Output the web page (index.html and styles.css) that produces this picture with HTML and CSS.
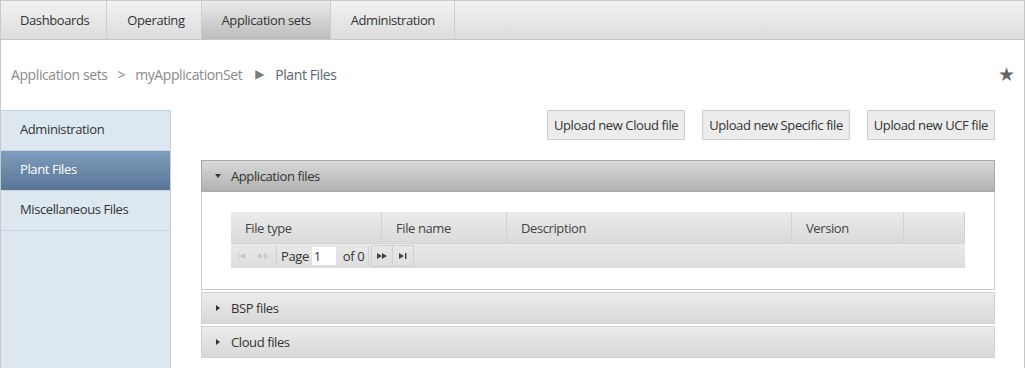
FILE: index.html
```html
<!DOCTYPE html>
<html lang="en">
<head>
  <meta charset="UTF-8" />
  <title>Plant Files</title>
  <link rel="stylesheet" href="styles.css">
</head>
<body>
  <div class="page">
    <nav class="topnav">
      <a class="tab">Dashboards</a>
      <a class="tab">Operating</a>
      <a class="tab active">Application sets</a>
      <a class="tab">Administration</a>
      <div class="tab-fill"></div>
    </nav>

    <div class="crumbs">
      <span class="crumb">Application sets</span>
      <span class="sep">&gt;</span>
      <span class="crumb">myApplicationSet</span>
      <span class="sep arrow">&#9654;</span>
      <span class="crumb current">Plant Files</span>
      <span class="star">&#9733;</span>
    </div>

    <div class="content">
      <aside class="sidebar">
        <div class="side-item">Administration</div>
        <div class="side-item active">Plant Files</div>
        <div class="side-item">Miscellaneous Files</div>
      </aside>

      <main class="main">
        <div class="actions">
          <button class="btn">Upload new Cloud file</button>
          <button class="btn">Upload new Specific file</button>
          <button class="btn">Upload new UCF file</button>
        </div>

        <section class="panel open">
          <div class="panel-head"><span class="caret down"></span>Application files</div>
          <div class="panel-body">
            <div class="grid">
              <div class="grid-head">
                <div class="col c1">File type</div>
                <div class="col c2">File name</div>
                <div class="col c3">Description</div>
                <div class="col c4">Version</div>
                <div class="col c5"></div>
              </div>
              <div class="pager">
                <span class="pg-ico off">
                  <svg width="8" height="6" viewBox="0 0 8 6"><rect x="0" y="0" width="1" height="6" fill="#c4c4c4"/><path d="M7 0 L2 3 L7 6 Z" fill="#c4c4c4"/></svg>
                </span>
                <span class="pg-ico off">
                  <svg width="10" height="6" viewBox="0 0 10 6"><path d="M4 0 L0 3 L4 6 Z M10 0 L5 3 L10 6 Z" fill="#c4c4c4"/></svg>
                </span>
                <span class="pg-sep"></span>
                <span class="pg-text">Page</span>
                <input class="pg-input" type="text" value="1">
                <span class="pg-text">of 0</span>
                <span class="pg-sep"></span>
                <span class="pg-btn">
                  <svg width="10" height="6" viewBox="0 0 10 6"><path d="M0 0 L5 3 L0 6 Z M5 0 L10 3 L5 6 Z" fill="#444"/></svg>
                </span>
                <span class="pg-btn">
                  <svg width="8" height="6" viewBox="0 0 8 6"><path d="M0 0 L5 3 L0 6 Z" fill="#444"/><rect x="6" y="0" width="1.5" height="6" fill="#444"/></svg>
                </span>
              </div>
            </div>
          </div>
        </section>

        <section class="panel closed">
          <div class="panel-head"><span class="caret right"></span>BSP files</div>
        </section>

        <section class="panel closed">
          <div class="panel-head"><span class="caret right"></span>Cloud files</div>
        </section>
      </main>
    </div>
  </div>
</body>
</html>
```

FILE: styles.css
```css
body {
  margin: 0;
  font-family: 'Open Sans', 'Noto Sans', sans-serif;
  font-size: 13px;
  letter-spacing: -0.4px;
  color: #333;
  background: #fff;
}

.page {
  width: 1025px;
  height: 368px;
  box-sizing: border-box;
  border-left: 1px solid #c8c8c8;
  border-right: 1px solid #c8c8c8;
  overflow: hidden;
}

/* top navigation */
.topnav {
  display: flex;
  height: 38px;
  border-top: 1px solid #c8c8c8;
  border-bottom: 1px solid #c8c8c8;
  background: linear-gradient(#f2f2f2, #dcdcdc);
  margin-left: -1px;
}

.tab {
  padding: 0 19px 0 20px;
  line-height: 38px;
  border-right: 1px solid #cdcdcd;
  color: #333;
  white-space: nowrap;
}

.tab:first-child { padding-right: 17px; }
.tab:nth-child(2) { padding-right: 16px; }

.tab.active {
  background: linear-gradient(#ebebeb, #bcbcbc);
}

.tab-fill {
  flex: 1;
}

/* breadcrumb */
.crumbs {
  display: flex;
  align-items: center;
  height: 70px;
  padding: 0 0 2px 10px;
  box-sizing: border-box;
  font-size: 14px;
  color: #8a8a8a;
}

.sep {
  margin: 0 10px;
  color: #8a8a8a;
}

.sep.arrow {
  margin: 0 11px 0 13px;
  font-family: 'DejaVu Sans', sans-serif;
  font-size: 12px;
  color: #7a7a7a;
}

.crumb.current {
  color: #5c6670;
}

.star {
  margin-left: auto;
  margin-right: 9px;
  font-size: 19px;
  color: #666;
}

/* content */
.content {
  display: flex;
  height: 258px;
}

.sidebar {
  width: 169px;
  border-top: 1px solid #c9d6e2;
  border-right: 1px solid #c5d2de;
  background: #dce7f0;
}

.side-item {
  height: 39px;
  line-height: 37px;
  padding-left: 19px;
  border-bottom: 1px solid #c9d6e2;
  color: #333;
}

.side-item.active {
  background: linear-gradient(#7f9dbd, #5a7494);
  color: #fff;
}

.main {
  flex: 1;
  padding: 0 29px 0 30px;
}

.actions {
  display: flex;
  justify-content: flex-end;
  gap: 17px;
  margin-bottom: 20px;
}

.btn {
  height: 30px;
  padding: 0 6px;
  border: 1px solid #cdcdcd;
  background: #ececec;
  font-family: inherit;
  font-size: 13px;
  letter-spacing: -0.4px;
  color: #333;
}

/* panels */
.panel {
  margin-bottom: 2px;
}

.panel-head {
  display: flex;
  align-items: center;
  height: 30px;
  padding-left: 12px;
  border: 1px solid #d2d2d2;
  background: linear-gradient(#ececec, #d8d8d8);
  color: #333;
}

.panel.open .panel-head {
  border-color: #a9a9a9;
  background: linear-gradient(#d9d9d9, #b1b1b1);
}

.caret {
  width: 0;
  height: 0;
}

.caret.down {
  border-left: 3.5px solid transparent;
  border-right: 3.5px solid transparent;
  border-top: 4px solid #333;
  margin: 0 10px 0 1px;
}

.caret.right {
  border-top: 3.5px solid transparent;
  border-bottom: 3.5px solid transparent;
  border-left: 4px solid #333;
  margin: 0 11px 0 2px;
}

.panel-body {
  border: 1px solid #cccccc;
  border-top: none;
  padding: 20px 29px 21px 29px;
}

/* grid */
.grid-head {
  display: flex;
  height: 31px;
  background: linear-gradient(#ebebeb, #dadada);
  border-bottom: 1px solid #d4d4d4;
}

.col {
  padding-left: 14px;
  line-height: 32px;
  border-right: 1px solid #d2d2d2;
  box-sizing: border-box;
  color: #444;
}

.c1 { width: 151px; }
.c2 { width: 125px; }
.c3 { width: 285px; }
.c4 { width: 112px; }
.c5 { flex: 1; }

.pager {
  display: flex;
  align-items: center;
  height: 24px;
  padding-left: 1px;
  background: linear-gradient(#e9e9e9, #dddddd);
}

.pg-ico {
  display: flex;
  align-items: center;
  justify-content: center;
  width: 20px;
  height: 20px;
}

.pg-sep {
  width: 1px;
  height: 20px;
  margin: 0 3px 0 4px;
  background: #cfcfcf;
}

.pg-text + .pg-sep {
  margin: 0 2px 0 1px;
}

.pg-text {
  color: #333;
  margin: 0 3px 0 1px;
}

.pg-input {
  width: 24px;
  height: 18px;
  box-sizing: border-box;
  border: none;
  padding: 0 2px;
  margin: 0 6px 0 0;
  font-family: inherit;
  font-size: 13px;
  color: #333;
}

.pg-btn {
  display: flex;
  align-items: center;
  justify-content: center;
  width: 20px;
  height: 20px;
  border: 1px solid #d0d0d0;
  margin-right: -1px;
}
```
